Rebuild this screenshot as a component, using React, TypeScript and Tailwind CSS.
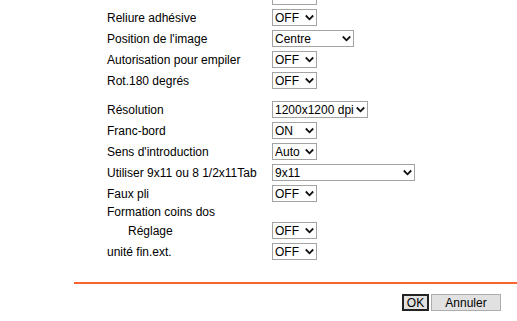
import React from "react";

type Row = { label: string; value?: string; width?: number; indent?: boolean; short?: boolean };

const groupA: Row[] = [
  { label: "Reliure adhésive", value: "OFF", width: 45 },
  { label: "Position de l'image", value: "Centre", width: 82 },
  { label: "Autorisation pour empiler", value: "OFF", width: 45 },
  { label: "Rot.180 degrés", value: "OFF", width: 45 },
];

const groupB: Row[] = [
  { label: "Résolution", value: "1200x1200 dpi", width: 96 },
  { label: "Franc-bord", value: "ON", width: 45 },
  { label: "Sens d'introduction", value: "Auto", width: 45 },
  { label: "Utiliser 9x11 ou 8 1/2x11Tab", value: "9x11", width: 143 },
  { label: "Faux pli", value: "OFF", width: 45 },
  { label: "Formation coins dos", short: true },
  { label: "Réglage", value: "OFF", width: 45, indent: true },
  { label: "unité fin.ext.", value: "OFF", width: 45 },
];

function Chevron() {
  return (
    <svg width="9" height="7" viewBox="0 0 9 7" className="shrink-0">
      <polyline points="0.8,1.5 4.5,5.3 8.2,1.5" fill="none" stroke="#111" strokeWidth="1.8" />
    </svg>
  );
}

function FakeSelect({ value, width }: { value: string; width: number }) {
  return (
    <div
      className="h-[17px] flex items-center justify-between gap-[2px] border border-[#a3a3a3] bg-white pl-[2px] pr-[2px] text-[12px] leading-none text-black whitespace-nowrap"
      style={{ width }}
    >
      <span>{value}</span>
      <Chevron />
    </div>
  );
}

function FieldRow({ row }: { row: Row }) {
  return (
    <div className={row.short ? "h-[16px] flex items-center" : "h-[21px] flex items-center"}>
      <div className={row.indent ? "w-[165px] pl-[21px]" : "w-[165px]"}>{row.label}</div>
      {row.value && <FakeSelect value={row.value} width={row.width ?? 45} />}
    </div>
  );
}

export default function App() {
  return (
    <div
      className="w-[517px] h-[321px] overflow-hidden bg-white text-[12px] text-black"
      style={{ fontFamily: '"Liberation Sans", Arial, sans-serif' }}
    >
      <div className="pl-[107px] mt-[-14px]">
        {/* previous row, scrolled mostly out of view */}
        <div className="h-[21px] flex items-center">
          <div className="w-[165px]"></div>
          <div className="w-[45px] h-[17px] border border-[#a3a3a3] bg-white" />
        </div>
        {groupA.map((r) => (
          <FieldRow key={r.label} row={r} />
        ))}
        <div className="h-[8px]" />
        {groupB.map((r) => (
          <FieldRow key={r.label} row={r} />
        ))}
      </div>
      <div className="ml-[74px] mt-[20px] h-[2px] bg-[#fa6432]" />
      <div className="flex justify-end pr-[16px] mt-[10px] gap-[2px]">
        <button className="w-[27px] h-[17px] border-2 border-[#222] bg-[#e1e1e1] text-[12px] leading-none flex items-center justify-center">
          OK
        </button>
        <button className="w-[70px] h-[17px] border border-[#adadad] bg-[#e1e1e1] text-[12px] leading-none flex items-center justify-center">
          Annuler
        </button>
      </div>
    </div>
  );
}
